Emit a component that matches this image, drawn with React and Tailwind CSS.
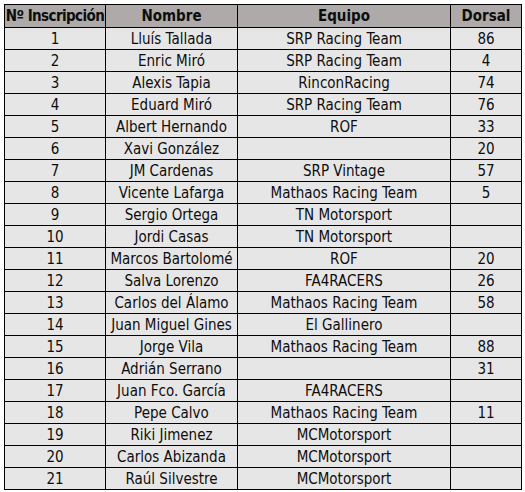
const rows = [
  [1, "Lluís Tallada", "SRP Racing Team", "86"],
  [2, "Enric Miró", "SRP Racing Team", "4"],
  [3, "Alexis Tapia", "RinconRacing", "74"],
  [4, "Eduard Miró", "SRP Racing Team", "76"],
  [5, "Albert Hernando", "ROF", "33"],
  [6, "Xavi González", "", "20"],
  [7, "JM Cardenas", "SRP Vintage", "57"],
  [8, "Vicente Lafarga", "Mathaos Racing Team", "5"],
  [9, "Sergio Ortega", "TN Motorsport", ""],
  [10, "Jordi Casas", "TN Motorsport", ""],
  [11, "Marcos Bartolomé", "ROF", "20"],
  [12, "Salva Lorenzo", "FA4RACERS", "26"],
  [13, "Carlos del Álamo", "Mathaos Racing Team", "58"],
  [14, "Juan Miguel Gines", "El Gallinero", ""],
  [15, "Jorge Vila", "Mathaos Racing Team", "88"],
  [16, "Adrián Serrano", "", "31"],
  [17, "Juan Fco. García", "FA4RACERS", ""],
  [18, "Pepe Calvo", "Mathaos Racing Team", "11"],
  [19, "Riki Jimenez", "MCMotorsport", ""],
  [20, "Carlos Abizanda", "MCMotorsport", ""],
  [21, "Raúl Silvestre", "MCMotorsport", ""],
];

const widths = ["w-[101px]", "w-[132px]", "w-[213px]", "w-[71px]"];

const Cell = ({ w, head, className = "", children }) => (
  <div
    className={`${w} ${
      head ? "h-[23px] font-bold pt-[1px]" : "h-[22px] pt-[2px]"
    } text-[15px] flex items-center justify-center border-r border-b border-black whitespace-nowrap overflow-hidden leading-none ${className}`}
  >
    {children}
  </div>
);

const App = () => {
  return (
    <div className="w-[525px] h-[492px] bg-white pt-[4px] pl-[4px] text-[#0d0d0d] font-['DejaVu_Sans_Condensed',sans-serif]">
      <div className="w-fit border-l border-t border-black">
        <div className="flex bg-[#aeaaaa]">
          <Cell w={widths[0]} head className="tracking-[-0.6px]">
            Nº Inscripción
          </Cell>
          <Cell w={widths[1]} head>Nombre</Cell>
          <Cell w={widths[2]} head>Equipo</Cell>
          <Cell w={widths[3]} head>Dorsal</Cell>
        </div>
        {rows.map((r) => (
          <div key={r[0]} className="flex bg-[#e7e6e6]">
            {r.map((v, i) => (
              <Cell key={i} w={widths[i]}>
                {v}
              </Cell>
            ))}
          </div>
        ))}
      </div>
    </div>
  );
};

export default App;
